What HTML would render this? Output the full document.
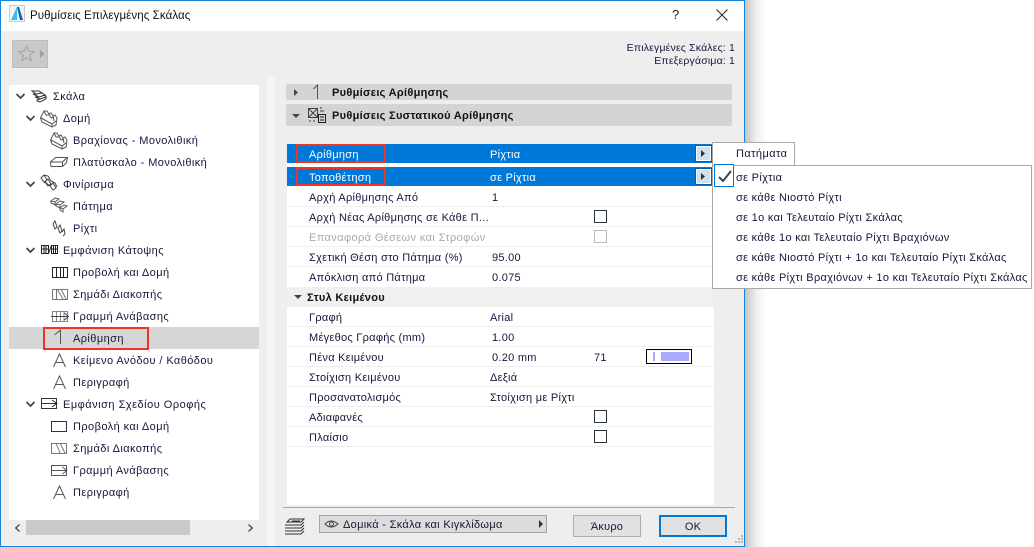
<!DOCTYPE html>
<html><head><meta charset="utf-8"><style>
html,body{margin:0;padding:0;width:1034px;height:547px;overflow:hidden;background:#fff}
#d{position:absolute;left:0;top:0;width:745px;height:547px;overflow:hidden}
.a{position:absolute}
.t{position:absolute;height:16px;line-height:16px;white-space:nowrap;font-family:"Liberation Sans",sans-serif;font-size:11px;letter-spacing:.42px;color:#16163c}
.r .t{letter-spacing:.28px}
.p .t{letter-spacing:.31px}
.w{color:#fff}.t.b{font-weight:bold;letter-spacing:.3px;color:#111}
.r .t.g{color:#aaa;letter-spacing:.39px}
.ln{position:absolute;left:287px;width:427px;height:1px;background:#eee}
.cb{position:absolute;width:11px;height:11px;border:1px solid #2a3238;background:#fff}
svg{position:absolute;overflow:visible}
svg *{fill:none;stroke:#3a4044;stroke-width:1}
</style></head><body>
<div class="a" style="left:745px;top:0;width:22px;height:547px;background:linear-gradient(90deg,#c4c4c4,#efefef 50%,#fff)"></div>
<div id="d">
<div class="a" style="left:0;top:0;width:745px;height:547px;background:#eee"></div>
<div class="a" style="left:0;top:0;width:745px;height:31px;background:#fff"></div>
<div class="a" style="left:267px;top:77px;width:8px;height:469px;background:#f6f6f6"></div>
<div class="a" style="left:0;top:0;width:743px;height:545px;border:1px solid #1583dc"></div>

<svg style="left:9px;top:5px" width="16" height="18"><rect x=".5" y=".5" width="15" height="16" style="stroke:#ccc;fill:#f4f4f4"/><path d="M2 15 L8 2 L8 15Z" style="fill:#27c3ee;stroke:none"/><path d="M8 2 L10 2 L14 15 L11 15Z" style="fill:#0a5fc0;stroke:none"/></svg>
<div class="t" style="left:30px;top:8px;font-size:11.500px;letter-spacing:.1px;color:#111">Ρυθμίσεις Επιλεγμένης Σκάλας</div>
<div class="t" style="left:672px;top:7px;font-size:13px;color:#222">?</div>
<svg style="left:716px;top:9px" width="12" height="12"><path d="M.5 .5L11.5 11.5M11.5 .5L.5 11.5" style="stroke:#222"/></svg>

<div class="a" style="left:12px;top:40px;width:34px;height:26px;background:#c9c9c9;border:1px solid #bdbdbd"></div>
<svg style="left:18px;top:45px" width="17" height="17"><path d="M8.500 1L10.600 6.300 16 6.600 11.800 10.100 13.200 15.600 8.500 12.600 3.800 15.600 5.200 10.100 1 6.600 6.400 6.300Z" style="stroke:#a2a2a2"/></svg>
<svg style="left:40px;top:50px" width="5" height="8"><path d="M0 0L4.500 4 0 8Z" style="fill:#a0a0a0;stroke:none"/></svg>

<div class="t" style="right:10px;top:40px;letter-spacing:.17px;font-size:10.500px">Επιλεγμένες Σκάλες: 1</div>
<div class="t" style="right:10px;top:53px;letter-spacing:.17px;font-size:10.500px">Επεξεργάσιμα: 1</div>

<!-- tree -->
<div class="a" style="left:9px;top:85px;width:250px;height:435px;background:#fff"></div>
<div class="a" style="left:9px;top:327px;width:250px;height:22px;background:#d6d6d6"></div>
<div class="a" style="left:43px;top:327px;width:102px;height:19px;border:2px solid #ee3524"></div>
<div class="a" style="left:26px;top:520px;width:164px;height:15px;background:#c9c9c9"></div>
<svg style="left:15px;top:524px" width="5" height="8"><path d="M4.500 .5L.8 4 4.500 7.500" style="stroke:#555;stroke-width:1.500"/></svg>
<svg style="left:248px;top:524px" width="5" height="8"><path d="M.5 .5L4.200 4 .5 7.500" style="stroke:#555;stroke-width:1.500"/></svg>

<svg style="left:0;top:0" width="280" height="547">
<path d="M16.500 94L20.500 98 24.500 94M26.500 116L30.500 120 34.500 116M26.500 182L30.500 186 34.500 182M26.500 248L30.500 252 34.500 248M26.500 402L30.500 406 34.500 402" style="stroke:#444;stroke-width:1.700"/>
<!-- stair main -->
<path d="M32 91h7l3 2-6 1zM33 94l3 0 6-1 3 2-6 2zM35 97l4 0 6-2 1 2-6 2zM37 100l3-1 6-2v2l-6 3-3-1z" style="stroke:#333"/>
<!-- monolith 1 -->
<path d="M40.500 118L44 111 47 111 49 114 51 113 53 116 55 115 57 118 56 125 52 127 42 122ZM44 111l2 4 3 0M49 114l2 4 3-1M53 116l1 5M41 118l11 6 4-3M52 124v3" style="stroke:#555"/>
<!-- monolith 2 -->
<path d="M50.500 140L54 133 57 133 59 136 61 135 63 138 65 137 67 140 66 147 62 149 52 144ZM54 133l2 4 3 0M59 136l2 4 3-1M63 138l1 5M51 140l11 6 4-3M62 146v3" style="stroke:#555"/>
<!-- landing -->
<path d="M50.500 162l5-4.500h12l-1 5-4 4H51zM50.500 162h12l4-4M62.500 162v4" style="stroke:#555"/>
<!-- finish -->
<path d="M41 178l3-3 3 5-3 2zM45 182l3-3 3 5-3 2zM50 186l3-3 3 5-3 2zM44 175l4 1 3 5 4 2 2 4M41 178l3 4 1 1M45 182l5 4" style="stroke:#444"/>
<path d="M51 201l4-3 4 1-4 3zM56 204l4-3 4 1-4 3zM60 208l4-3 3 1-4 3zM51 201v2l4 2v-3M56 204v2l4 2v-3M60 208v2l3 2v-3" style="stroke:#555"/>
<path d="M53 224l2-3 2 6-2 2zM58 228l2-3 2 6-2 2zM62 232l2-3 1 5-2 2" style="stroke:#444"/>
<!-- plan -->
<path d="M41.500 245.500h7v8h-7zM51.500 245.500h6v8h-6zM44 245v8M46 245v8M48.500 253.500l3-8M53.500 245v8M55.500 245v8M51 249h6M41 249h7" style="stroke:#222"/>
<path d="M52.500 267.500h15v10h-15zM56.500 267v10M60.500 267v10M63.500 267v10" style="stroke:#222"/>
<path d="M52.500 289.500h15v10h-15zM56.500 289v10M57 289l6 10M61 289l5 10" style="stroke:#777"/>
<path d="M52.500 311.500h15v10h-15zM56.500 311v10M60.500 311v10M64 311v10" style="stroke:#888"/>
<path d="M51 316.500h17M64.500 313l4 3.500-4 3.500" style="stroke:#444"/>
<path d="M60.500 344V330l-6 5" style="stroke:#555"/>
<path d="M53.500 367l6-13 6 13M55.500 362.500h8M53.500 389l6-13 6 13M55.500 384.500h8M53.500 499l6-13 6 13M55.500 494.500h8" style="stroke:#555"/>
<!-- RCP -->
<path d="M41.500 398.500h15v10h-15zM41 403.500h15M52 400l5 3.500-5 3.500" style="stroke:#333"/>
<path d="M51.500 421.500h15v10h-15z" style="stroke:#333"/>
<path d="M51.500 443.500h15v10h-15zM56 443l4 10M60 443l5 10" style="stroke:#777"/>
<path d="M51.500 465.500h15v10h-15zM51 470.500h16M62.500 467l4.500 3.500-4.500 3.500" style="stroke:#555"/>
</svg>

<div class="t" style="left:53px;top:89px">Σκάλα</div>
<div class="t" style="left:63px;top:111px">Δομή</div>
<div class="t" style="left:73px;top:133px">Βραχίονας - Μονολιθική</div>
<div class="t" style="left:73px;top:155px">Πλατύσκαλο - Μονολιθική</div>
<div class="t" style="left:63px;top:177px">Φινίρισμα</div>
<div class="t" style="left:73px;top:199px">Πάτημα</div>
<div class="t" style="left:73px;top:221px">Ρίχτι</div>
<div class="t" style="left:63px;top:243px">Εμφάνιση Κάτοψης</div>
<div class="t" style="left:73px;top:265px">Προβολή και Δομή</div>
<div class="t" style="left:73px;top:287px">Σημάδι Διακοπής</div>
<div class="t" style="left:73px;top:309px">Γραμμή Ανάβασης</div>
<div class="t" style="left:73px;top:331px">Αρίθμηση</div>
<div class="t" style="left:73px;top:353px">Κείμενο Ανόδου / Καθόδου</div>
<div class="t" style="left:73px;top:375px">Περιγραφή</div>
<div class="t" style="left:63px;top:397px;letter-spacing:.5px">Εμφάνιση Σχεδίου Οροφής</div>
<div class="t" style="left:73px;top:419px">Προβολή και Δομή</div>
<div class="t" style="left:73px;top:441px">Σημάδι Διακοπής</div>
<div class="t" style="left:73px;top:463px">Γραμμή Ανάβασης</div>
<div class="t" style="left:73px;top:485px">Περιγραφή</div>

<!-- right headers -->
<div class="a" style="left:286px;top:84px;width:446px;height:16px;background:#d4d4d4;border-radius:2px"></div>
<div class="a" style="left:286px;top:104px;width:446px;height:22px;background:#d4d4d4;border-radius:2px"></div>
<svg style="left:0;top:0" width="340" height="130">
<path d="M294 89l4 3.500-4 3.500z" style="fill:#444;stroke:none"/>
<path d="M292 114h8l-4 4z" style="fill:#444;stroke:none"/>
<path d="M317.500 99V85l-4 4" style="stroke:#555"/>
<path d="M308.500 108.500h9v9h-9zM309 109l8 8M317 109l-8 8M309 121h2M313 121h2M320 111h4M320 108h2"/>
<path d="M318.500 114.500h7v8h-7zM320 117h4M320 120h4" style="stroke:#222"/>
</svg>
<div class="t b" style="left:332px;top:85px">Ρυθμίσεις Αρίθμησης</div>
<div class="t b" style="left:332px;top:108px">Ρυθμίσεις Συστατικού Αρίθμησης</div>

<!-- table -->
<div class="a" style="left:287px;top:144px;width:427px;height:361px;background:#fff"></div>
<div class="a" style="left:287px;top:144px;width:425px;height:19px;background:#0078d7"></div>
<div class="a" style="left:287px;top:167px;width:425px;height:19px;background:#0078d7"></div>
<div class="a" style="left:296px;top:144px;width:86px;height:15px;border:2px solid #ee3524"></div>
<div class="a" style="left:296px;top:167px;width:86px;height:15px;border:2px solid #ee3524"></div>
<div class="a" style="left:696px;top:146px;width:13px;height:13px;background:#cfe0ee;border:1px solid #fff;outline:1px solid #0a5ea8"></div>
<div class="a" style="left:696px;top:169px;width:13px;height:13px;background:#cfe0ee;border:1px solid #fff;outline:1px solid #0a5ea8"></div>
<svg style="left:0;top:0" width="720" height="190"><path d="M701 150l4 3.500-4 3.500z" style="fill:#333;stroke:none"/><path d="M701 173l4 3.500-4 3.500z" style="fill:#333;stroke:none"/></svg>

<div class="ln" style="top:206px"></div><div class="ln" style="top:226px"></div><div class="ln" style="top:246px"></div><div class="ln" style="top:266px"></div>
<div class="a" style="left:287px;top:287px;width:427px;height:20px;background:#f0f0f0"></div>
<div class="ln" style="top:326px"></div><div class="ln" style="top:346px"></div><div class="ln" style="top:366px"></div><div class="ln" style="top:386px"></div><div class="ln" style="top:406px"></div><div class="ln" style="top:426px"></div><div class="ln" style="top:446px"></div>
<svg style="left:0;top:0" width="310" height="305"><path d="M294 295h8l-4 4z" style="fill:#444;stroke:none"/></svg>

<div class="r">
<div class="t w" style="left:309px;top:147px">Αρίθμηση</div><div class="t w" style="left:490px;top:147px">Ρίχτια</div>
<div class="t w" style="left:309px;top:170px">Τοποθέτηση</div><div class="t w" style="left:490px;top:170px">σε Ρίχτια</div>
<div class="t" style="left:309px;top:190px">Αρχή Αρίθμησης Από</div><div class="t" style="left:492px;top:190px">1</div>
<div class="t" style="left:309px;top:210px">Αρχή Νέας Αρίθμησης σε Κάθε Π...</div>
<div class="t g" style="left:309px;top:230px">Επαναφορά Θέσεων και Στροφών</div>
<div class="t" style="left:309px;top:250px">Σχετική Θέση στο Πάτημα (%)</div><div class="t" style="left:492px;top:250px">95.00</div>
<div class="t" style="left:309px;top:270px">Απόκλιση από Πάτημα</div><div class="t" style="left:492px;top:270px">0.075</div>
<div class="t b" style="left:307px;top:290px">Στυλ Κειμένου</div>
<div class="t" style="left:309px;top:310px">Γραφή</div><div class="t" style="left:490px;top:310px">Arial</div>
<div class="t" style="left:309px;top:330px">Μέγεθος Γραφής (mm)</div><div class="t" style="left:492px;top:330px">1.00</div>
<div class="t" style="left:309px;top:350px">Πένα Κειμένου</div><div class="t" style="left:492px;top:350px">0.20 mm</div><div class="t" style="left:594px;top:350px">71</div>
<div class="t" style="left:309px;top:370px">Στοίχιση Κειμένου</div><div class="t" style="left:490px;top:370px">Δεξιά</div>
<div class="t" style="left:309px;top:390px">Προσανατολισμός</div><div class="t" style="left:490px;top:390px">Στοίχιση με Ρίχτι</div>
<div class="t" style="left:309px;top:410px">Αδιαφανές</div>
<div class="t" style="left:309px;top:430px">Πλαίσιο</div>
</div>
<div class="cb" style="left:594px;top:210px"></div>
<div class="cb" style="left:594px;top:230px;border-color:#bbb"></div>
<div class="cb" style="left:594px;top:410px"></div>
<div class="cb" style="left:594px;top:430px"></div>
<div class="a" style="left:646px;top:349px;width:44px;height:13px;border:1px solid #000;background:#fff"></div>
<div class="a" style="left:653px;top:352px;width:2px;height:9px;background:#aaaaff"></div>
<div class="a" style="left:661px;top:352px;width:28px;height:9px;background:#aaaaff"></div>

<!-- bottom -->
<div class="a" style="left:283px;top:507px;width:452px;height:1px;background:#a8a8a8"></div>
<svg style="left:0;top:0" width="320" height="547"><path d="M290 519h14l-3 3h-14zM292 521h8M285 525h16l3-3M285 528h16l3-3M285 531h16l3-3M285 534h16l3-3" style="stroke:#333"/></svg>
<div class="a" style="left:319px;top:515px;width:226px;height:16px;background:#dcdcdc;border:1px solid #a6a6a6"></div>
<svg style="left:0;top:0" width="550" height="547"><path d="M325 524q6-6 13 0q-7 6-13 0z" style="stroke:#444"/><circle cx="331.500" cy="524" r="2" style="stroke:#444"/><path d="M539 520l4 4-4 4z" style="fill:#333;stroke:none"/></svg>
<div class="t" style="left:343px;top:517px;letter-spacing:.32px">Δομικά - Σκάλα και Κιγκλίδωμα</div>
<div class="a" style="left:573px;top:515px;width:66px;height:20px;background:#e1e1e1;border:1px solid #adadad"></div>
<div class="t" style="left:573px;top:519px;width:68px;text-align:center;letter-spacing:.2px">Άκυρο</div>
<div class="a" style="left:659px;top:515px;width:64px;height:18px;background:#e1e1e1;border:2px solid #0078d7"></div>
<div class="t" style="left:659px;top:519px;width:68px;text-align:center;letter-spacing:.2px">OK</div>
<svg style="left:0;top:0" width="745" height="547"><path d="M741 536h2M738 539h2M741 539h2M735 542h2M738 542h2M741 542h2" style="stroke:#b8b8b8;stroke-width:2"/></svg>
</div>

<!-- popup -->
<div class="a" style="left:712px;top:142px;width:81px;height:23px;background:#fff;border:1px solid #a8a8a8"></div>
<div class="a" style="left:712px;top:165px;width:318px;height:122px;background:#fff;border:1px solid #a8a8a8"></div>
<div class="a" style="left:714px;top:164px;width:18px;height:21px;border:1px solid #0078d7;background:#fff"></div>
<svg style="left:0;top:0" width="740" height="190"><path d="M719 177l4 4 8-10" style="stroke:#444;stroke-width:2"/></svg>
<div class="t" style="left:736px;top:146px">Πατήματα</div>
<div class="p">
<div class="t" style="left:736px;top:170px">σε Ρίχτια</div>
<div class="t" style="left:736px;top:190px">σε κάθε Νιοστό Ρίχτι</div>
<div class="t" style="left:736px;top:210px">σε 1ο και Τελευταίο Ρίχτι Σκάλας</div>
<div class="t" style="left:736px;top:230px">σε κάθε 1ο και Τελευταίο Ρίχτι Βραχιόνων</div>
<div class="t" style="left:736px;top:250px">σε κάθε Νιοστό Ρίχτι + 1ο και Τελευταίο Ρίχτι Σκάλας</div>
<div class="t" style="left:736px;top:270px">σε κάθε Ρίχτι Βραχιόνων + 1ο και Τελευταίο Ρίχτι Σκάλας</div>
</div>
</body></html>
